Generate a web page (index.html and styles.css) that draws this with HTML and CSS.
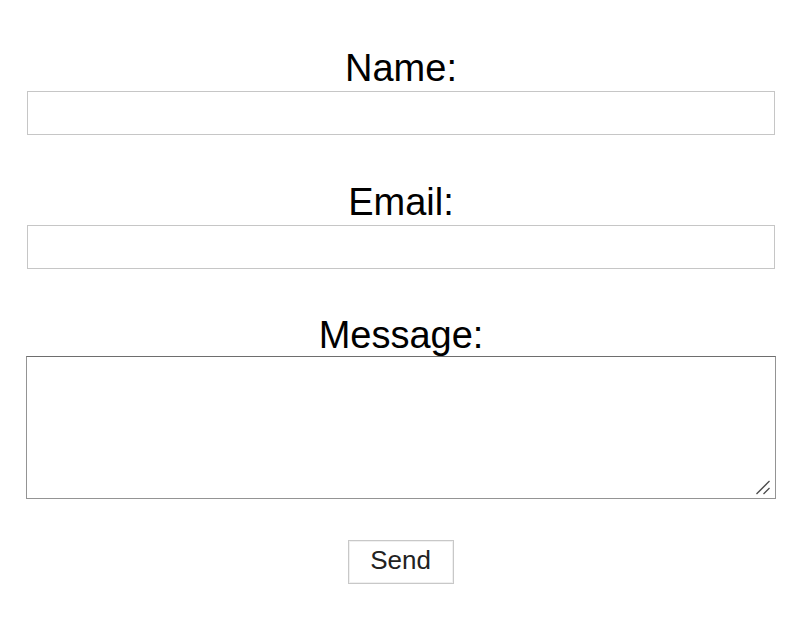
FILE: index.html
```html
<!DOCTYPE html>
<html>
<head>
<meta charset="utf-8">
<link rel="stylesheet" href="styles.css">
</head>
<body>
<form class="contact">
  <label class="field-label" for="name">Name:</label>
  <input class="field-input" id="name" type="text">
  <label class="field-label" for="email">Email:</label>
  <input class="field-input" id="email" type="email">
  <label class="field-label msg-label" for="message">Message:</label>
  <div class="area-wrap">
    <textarea class="field-area" id="message"></textarea>
    <svg class="grip" width="16" height="16" viewBox="0 0 16 16" aria-hidden="true">
      <line x1="1.5" y1="15" x2="14.5" y2="2" stroke="#4a4a4a" stroke-width="1.3"/>
      <line x1="8.5" y1="15" x2="14.5" y2="9" stroke="#4a4a4a" stroke-width="1.3"/>
    </svg>
  </div>
  <button class="send" type="button">Send</button>
</form>
</body>
</html>
```
FILE: styles.css
```css
html, body {
  margin: 0;
  padding: 0;
  background: #fff;
}
body {
  font-family: "Liberation Sans", Arial, sans-serif;
  color: #000;
}
.contact {
  display: flex;
  flex-direction: column;
  align-items: center;
  padding: 45px 29px 0 27px;
}
.field-label {
  display: block;
  box-sizing: border-box;
  font-size: 38px;
  line-height: 45px;
  height: 45px;
  padding-top: 1px;
  text-align: center;
  margin-bottom: 1px;
}
.field-input {
  box-sizing: border-box;
  width: 748px;
  height: 44px;
  margin: 0 0 44px 0;
  border: 1px solid #c6c6c6;
  background: #fff;
  padding: 0 8px;
  font-size: 16px;
  font-family: "Liberation Sans", Arial, sans-serif;
}
.msg-label {
  margin-top: -1px;
  margin-bottom: 0;
}
.area-wrap {
  position: relative;
  align-self: flex-start;
  margin-left: -1px;
  width: 750px;
  height: 143px;
  margin-top: -1px;
}
.field-area {
  display: block;
  box-sizing: border-box;
  width: 750px;
  height: 143px;
  margin: 0;
  border: 1px solid #949494;
  border-top-color: #6e6e6e;
  background: #fff;
  font-family: "Liberation Mono", monospace;
  font-size: 14px;
  resize: none;
}
.grip {
  position: absolute;
  right: 5px;
  bottom: 4px;
}
.send {
  margin-top: 41px;
  box-sizing: border-box;
  width: 106px;
  height: 44px;
  background: #fff;
  border: 1px solid #c8c8c8;
  box-shadow: inset 0 0 0 1px #f0f0f0;
  color: #222;
  font-family: "Liberation Sans", Arial, sans-serif;
  font-size: 26px;
  padding: 0 0 3px 0;
  margin-left: -1px;
}
```
